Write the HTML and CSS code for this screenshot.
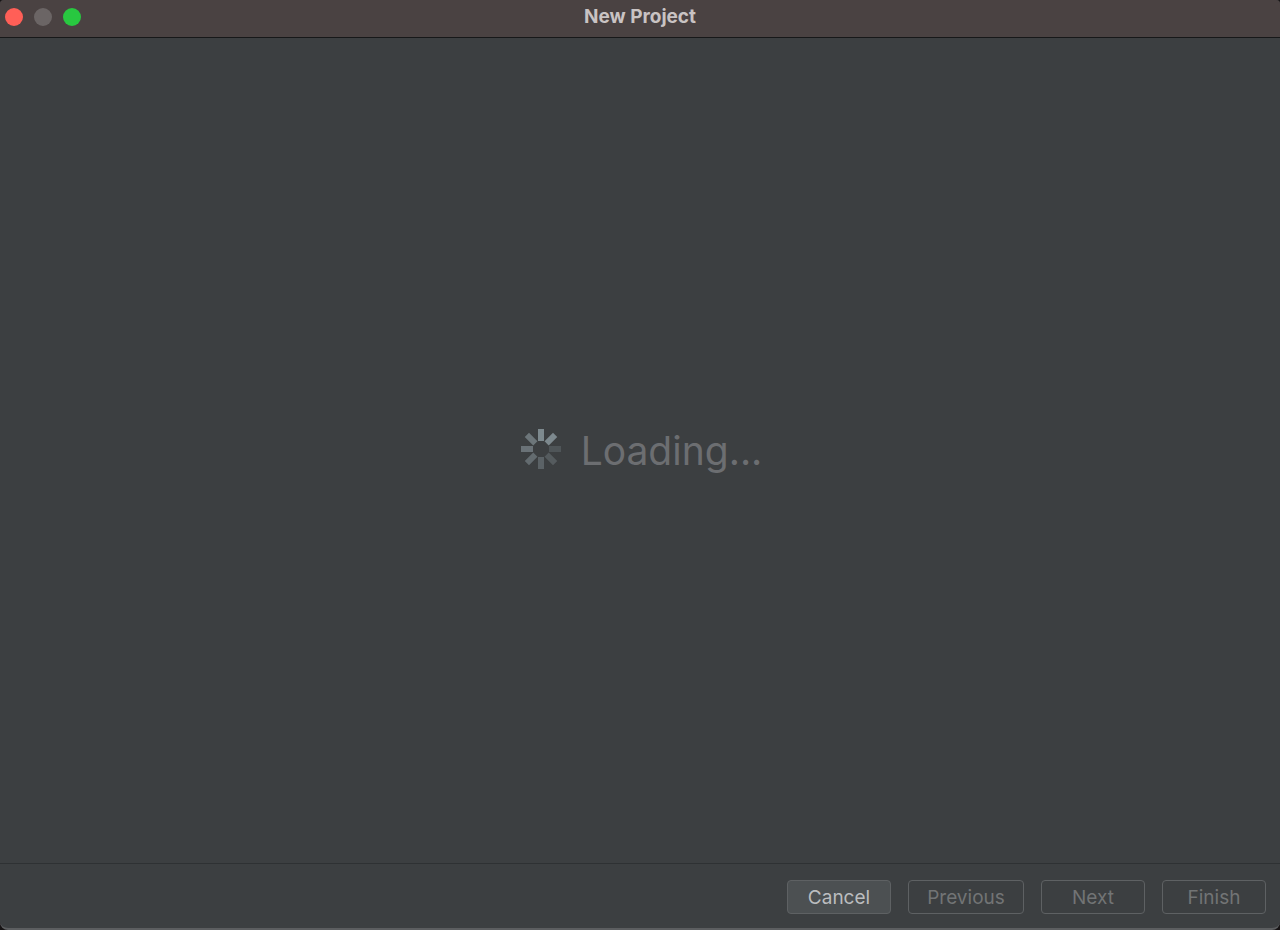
FILE: index.html
```html
<!DOCTYPE html>
<html lang="en">
<head>
<meta charset="utf-8">
<title>New Project</title>
<link rel="stylesheet" href="styles.css">
</head>
<body>
<div class="window">
  <header class="titlebar">
    <div class="controls">
      <button class="dot dot-close" type="button" aria-label="Close"></button>
      <button class="dot dot-minimize" type="button" aria-label="Minimize" disabled></button>
      <button class="dot dot-zoom" type="button" aria-label="Zoom"></button>
    </div>
    <h1 class="title">New Project</h1>
  </header>
  <main class="content">
    <div class="loading" role="status">
      <svg class="spinner" viewBox="0 0 42 42" aria-hidden="true">
        <g fill="#7d898e">
          <rect x="18" y="1" width="6" height="12"/>
          <rect x="18" y="1" width="6" height="12" transform="rotate(45 21 21)"/>
          <rect x="18" y="1" width="6" height="12" transform="rotate(90 21 21)" opacity=".3"/>
          <rect x="18" y="1" width="6" height="12" transform="rotate(135 21 21)" opacity=".38"/>
          <rect x="18" y="1" width="6" height="12" transform="rotate(180 21 21)" opacity=".48"/>
          <rect x="18" y="1" width="6" height="12" transform="rotate(225 21 21)" opacity=".6"/>
          <rect x="18" y="1" width="6" height="12" transform="rotate(270 21 21)" opacity=".7"/>
          <rect x="18" y="1" width="6" height="12" transform="rotate(315 21 21)" opacity=".75"/>
        </g>
      </svg>
      <span class="loading-text">Loading...</span>
    </div>
  </main>
  <footer class="actions">
    <button class="button button-active" type="button">Cancel</button>
    <button class="button button-wide" type="button" disabled>Previous</button>
    <button class="button" type="button" disabled>Next</button>
    <button class="button" type="button" disabled>Finish</button>
  </footer>
</div>
</body>
</html>
```
FILE: styles.css
```css
* {
  box-sizing: border-box;
}

body {
  margin: 0;
  background: #171415;
  font-family: Inter, "Liberation Sans", sans-serif;
}

.window {
  display: flex;
  flex-direction: column;
  min-height: 100vh;
  background: #3c3f41;
  border-bottom: 2px solid #5c5e60;
  border-radius: 4px 4px 8px 8px;
  overflow: hidden;
}

.titlebar {
  display: grid;
  grid-template-columns: 1fr auto 1fr;
  align-items: center;
  padding: 6px 5px 9px;
  background: #4a4242;
  border-bottom: 1px solid #171819;
}

.controls {
  display: flex;
  gap: 11px;
}

.dot {
  width: 18px;
  height: 18px;
  padding: 0;
  border: 0;
  border-radius: 50%;
}

.dot-close {
  background: #ff5f57;
}

.dot-minimize {
  background: #6b6565;
}

.dot-zoom {
  background: #28c840;
}

.title {
  margin: 0;
  color: #c9c3c3;
  font-size: 19px;
  font-weight: 700;
  line-height: 22px;
}

.content {
  display: flex;
  flex: 1;
  align-items: center;
  justify-content: center;
}

.loading {
  display: flex;
  align-items: center;
  gap: 19px;
  padding-left: 2px;
}

.spinner {
  width: 42px;
  height: 42px;
  margin-bottom: 3px;
}

.loading-text {
  color: #6c6e71;
  font-size: 39px;
  line-height: 48px;
}

.actions {
  display: flex;
  justify-content: flex-end;
  gap: 17px;
  padding: 16px 14px 14px;
  border-top: 1px solid #2e3133;
}

.button {
  width: 104px;
  height: 34px;
  padding: 2px 0 0;
  border: 1px solid #5e6163;
  border-radius: 4px;
  background: transparent;
  color: #727475;
  font-family: inherit;
  font-size: 19px;
  line-height: 24px;
}

.button-wide {
  width: 116px;
}

.button-active {
  background: #4c5052;
  color: #bbbdbf;
}
```
